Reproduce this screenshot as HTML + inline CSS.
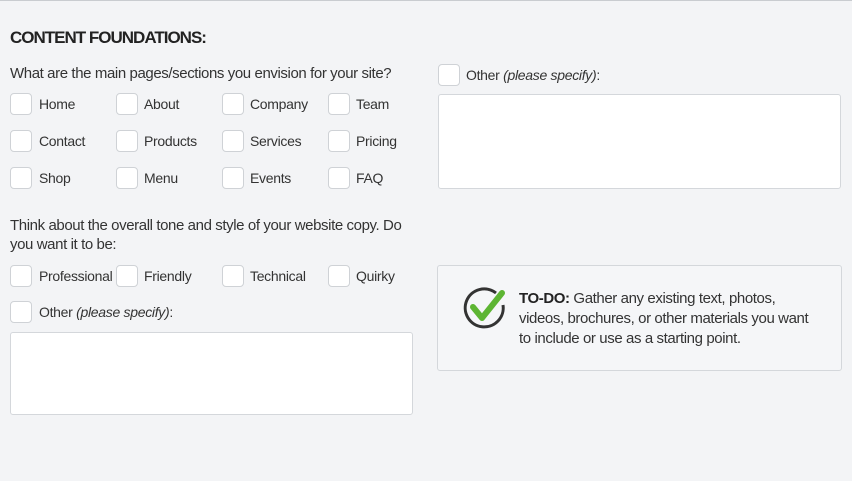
<!DOCTYPE html>
<html><head><style>
body{margin:0;width:852px;height:481px;background:#f3f4f6;font-family:"Liberation Sans",sans-serif;color:#333;position:relative;overflow:hidden}
.a{position:absolute;white-space:nowrap}
.cb{position:absolute;width:20px;height:20px;background:#fff;border:1px solid #cfd2d6;border-radius:4px}
.t{font-size:14px;letter-spacing:-0.3px;line-height:16px}
.box{position:absolute;background:#fff;border:1px solid #d4d7db;border-radius:3px}
</style></head><body>
<div class="a" style="left:0;top:0;width:852px;height:1px;background:#c9ccd0"></div>
<div class="a" style="left:10px;top:28px;font-size:17px;font-weight:bold;letter-spacing:-1px;color:#222">CONTENT FOUNDATIONS:</div>
<div class="a t" style="left:10px;top:66px;font-size:15px;letter-spacing:-0.4px">What are the main pages/sections you envision for your site?</div>

<div class="cb" style="left:10px;top:93px"></div><div class="a t" style="left:39px;top:96px">Home</div>
<div class="cb" style="left:116px;top:93px"></div><div class="a t" style="left:144px;top:96px">About</div>
<div class="cb" style="left:222px;top:93px"></div><div class="a t" style="left:250px;top:96px">Company</div>
<div class="cb" style="left:328px;top:93px"></div><div class="a t" style="left:356px;top:96px">Team</div>

<div class="cb" style="left:10px;top:130px"></div><div class="a t" style="left:39px;top:133px">Contact</div>
<div class="cb" style="left:116px;top:130px"></div><div class="a t" style="left:144px;top:133px">Products</div>
<div class="cb" style="left:222px;top:130px"></div><div class="a t" style="left:250px;top:133px">Services</div>
<div class="cb" style="left:328px;top:130px"></div><div class="a t" style="left:356px;top:133px">Pricing</div>

<div class="cb" style="left:10px;top:167px"></div><div class="a t" style="left:39px;top:170px">Shop</div>
<div class="cb" style="left:116px;top:167px"></div><div class="a t" style="left:144px;top:170px">Menu</div>
<div class="cb" style="left:222px;top:167px"></div><div class="a t" style="left:250px;top:170px">Events</div>
<div class="cb" style="left:328px;top:167px"></div><div class="a t" style="left:356px;top:170px">FAQ</div>

<div class="cb" style="left:438px;top:64px"></div><div class="a t" style="left:466px;top:67px">Other <i>(please specify)</i>:</div>
<div class="box" style="left:438px;top:94px;width:401px;height:93px"></div>

<div class="a t" style="left:10px;top:216px;font-size:15px;line-height:19px;letter-spacing:-0.4px">Think about the overall tone and style of your website copy. Do<br>you want it to be:</div>
<div class="cb" style="left:10px;top:265px"></div><div class="a t" style="left:39px;top:268px">Professional</div>
<div class="cb" style="left:116px;top:265px"></div><div class="a t" style="left:144px;top:268px">Friendly</div>
<div class="cb" style="left:222px;top:265px"></div><div class="a t" style="left:250px;top:268px">Technical</div>
<div class="cb" style="left:328px;top:265px"></div><div class="a t" style="left:356px;top:268px">Quirky</div>
<div class="cb" style="left:10px;top:301px"></div><div class="a t" style="left:39px;top:304px">Other <i>(please specify)</i>:</div>
<div class="box" style="left:10px;top:332px;width:401px;height:81px"></div>

<div class="box" style="left:437px;top:265px;width:403px;height:104px;background:#f5f6f8"></div>
<svg class="a" style="left:462px;top:285px" width="46" height="44" viewBox="0 0 46 44">
<path d="M34 8 A19 19 0 1 0 41 20" fill="none" stroke="#333" stroke-width="3"/>
<path d="M11 22 L20 33 L40 8" fill="none" stroke="#5db533" stroke-width="6" stroke-linecap="round" stroke-linejoin="round"/>
</svg>
<div class="a" style="left:519px;top:289px;font-size:15px;line-height:20px;letter-spacing:-0.4px;color:#333"><b style="color:#222">TO-DO:</b> Gather any existing text, photos,<br>videos, brochures, or other materials you want<br>to include or use as a starting point.</div>
</body></html>
